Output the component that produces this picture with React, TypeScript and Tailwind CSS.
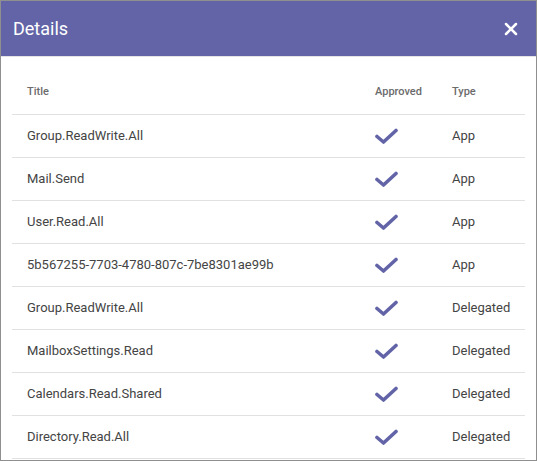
import { X } from "lucide-react";

const rows = [
  { title: "Group.ReadWrite.All", type: "App" },
  { title: "Mail.Send", type: "App" },
  { title: "User.Read.All", type: "App" },
  { title: "5b567255-7703-4780-807c-7be8301ae99b", type: "App" },
  { title: "Group.ReadWrite.All", type: "Delegated" },
  { title: "MailboxSettings.Read", type: "Delegated" },
  { title: "Calendars.Read.Shared", type: "Delegated" },
  { title: "Directory.Read.All", type: "Delegated" },
];

function Check() {
  return (
    <svg width="23" height="16" viewBox="0 0 23 16" fill="none">
      <path
        d="M2 8.5 L8.5 14 L21 2.5"
        stroke="#6264a7"
        strokeWidth="3.6"
        strokeLinecap="round"
        strokeLinejoin="round"
      />
    </svg>
  );
}

export default function App() {
  return (
    <div
      className="w-[537px] h-[461px] bg-white border border-[#8f8f8f] overflow-hidden"
      style={{ fontFamily: "Roboto, 'Noto Sans', sans-serif" }}>
      <div className="h-[56px] bg-[#6264a7] flex items-center justify-between pl-3 pr-[15px] border-b border-[#e3e3e3]">
        <span className="text-white text-[18px] leading-none">Details</span>
        <X className="text-white" size={20} strokeWidth={3} />
      </div>
      <div className="px-[11px] pt-[13px]">
        <div className="grid grid-cols-[363px_77px_1fr] h-[45px] items-center border-b border-[#e1e1e1] text-[11px] font-medium text-[#6b6b6b]">
          <span className="pl-[15px]">Title</span>
          <span>Approved</span>
          <span>Type</span>
        </div>
        {rows.map((r, i) => (
          <div
            key={i}
            className="grid grid-cols-[363px_77px_1fr] h-[43px] items-center border-b border-[#e1e1e1] text-[13px] text-[#444]">
            <span className="pl-[15px]">{r.title}</span>
            <span className="flex">
              <Check />
            </span>
            <span>{r.type}</span>
          </div>
        ))}
      </div>
    </div>
  );
}
